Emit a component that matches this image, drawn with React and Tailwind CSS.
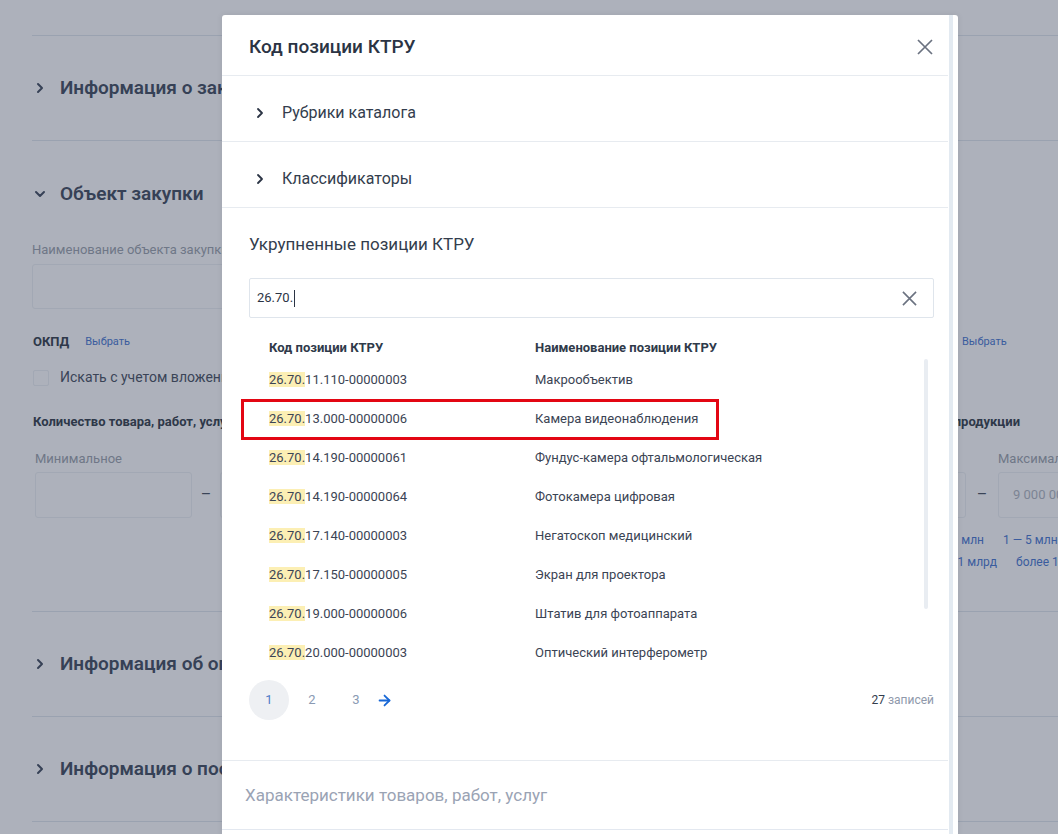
import { ChevronRight, ChevronDown, ArrowRight } from 'lucide-react';

const rows = [
  ['11.110-00000003', 'Макрообъектив'],
  ['13.000-00000006', 'Камера видеонаблюдения'],
  ['14.190-00000061', 'Фундус-камера офтальмологическая'],
  ['14.190-00000064', 'Фотокамера цифровая'],
  ['17.140-00000003', 'Негатоскоп медицинский'],
  ['17.150-00000005', 'Экран для проектора'],
  ['19.000-00000006', 'Штатив для фотоаппарата'],
  ['20.000-00000003', 'Оптический интерферометр'],
];

function Cross({ size = 16, className = '' }) {
  return (
    <svg width={size} height={size} viewBox="0 0 16 16" className={className} fill="none">
      <path d="M1 1L15 15M15 1L1 15" stroke="currentColor" strokeWidth="1.7" />
    </svg>
  );
}

function BgSection({ title }) {
  return (
    <div className="flex h-[105px] items-center gap-[12px] border-t border-[#9aa2b0]">
      <ChevronRight size={16} strokeWidth={3} className="text-[#364156]" />
      <span className="text-[19px] font-semibold text-[#364156] whitespace-nowrap">{title}</span>
    </div>
  );
}

function ObjectSection() {
  return (
    <div className="h-[471px] border-t border-[#9aa2b0]">
      <div className="flex h-[100px] items-center gap-[12px] pt-[6px]">
        <ChevronDown size={16} strokeWidth={3} className="text-[#364156]" />
        <span className="text-[19px] font-semibold text-[#364156]">Объект закупки</span>
      </div>
      <p className="text-[13px] leading-[18px] text-[#6f7787] whitespace-nowrap">Наименование объекта закупки</p>
      <div className="mt-[5px] h-[45px] w-[880px] rounded-[3px] border border-[#a2a8b4]" />

      <div className="mt-[25px] grid grid-cols-[500px_1fr] gap-x-[27px]">
        <div className="flex h-[16px] items-center gap-[16px] pl-[1px]">
          <span className="text-[13px] font-bold text-[#2e3849]">ОКПД</span>
          <span className="text-[11px] text-[#3a5c9e]">Выбрать</span>
        </div>
        <div className="flex h-[16px] items-center gap-[16px]">
          <span className="w-[387px] text-[13px] font-bold text-[#2e3849]">КТРУ</span>
          <span className="text-[11px] text-[#3a5c9e]">Выбрать</span>
        </div>
      </div>

      <div className="mt-[17px] flex items-center gap-[11px] pl-[1px]">
        <span className="h-[16px] w-[16px] rounded-[2px] border border-[#a2a8b4]" />
        <span className="text-[14px] text-[#3a4457] whitespace-nowrap">Искать с учетом вложенных позиций</span>
      </div>

      <div className="mt-[24px] grid grid-cols-[500px_1fr] gap-x-[27px] pl-[1px]">
        <span className="text-[13px] font-bold text-[#2e3849] whitespace-nowrap">Количество товара, работ, услуг</span>
        <span className="w-[460px] text-right text-[13px] font-bold text-[#2e3849] whitespace-nowrap">Цена за единицу продукции</span>
      </div>

      <div className="mt-[19px] grid grid-cols-[500px_1fr] gap-x-[27px]">
        <div className="pl-[3px]">
          <p className="text-[13px] leading-[16px] text-[#6f7787]">Минимальное</p>
          <div className="mt-[5px] flex items-center">
            <div className="h-[46px] w-[157px] rounded-[3px] border border-[#a2a8b4]" />
            <span className="w-[28px] text-center text-[#3a4457]">–</span>
            <div className="h-[46px] w-[157px] rounded-[3px] border border-[#a2a8b4]" />
          </div>
        </div>
        <div className="pl-[250px]">
          <div className="flex">
            <p className="w-[189px] text-[13px] leading-[16px] text-[#6f7787]">Минимальное</p>
            <p className="text-[13px] leading-[16px] text-[#6f7787]">Максимальное</p>
          </div>
          <div className="mt-[5px] flex items-center">
            <div className="h-[46px] w-[157px] rounded-[3px] border border-[#a2a8b4]" />
            <span className="w-[32px] text-center text-[#3a4457]">–</span>
            <div className="flex h-[46px] w-[157px] items-center rounded-[3px] border border-[#a2a8b4] pl-[14px] text-[13px] text-[#7c8494]">
              9 000 000
            </div>
          </div>
          <div className="mt-[13px] flex gap-[19px] text-[12px] text-[#3a5c9e]">
            <span className="w-[175px] text-right whitespace-nowrap">0,5 — 1 млн</span>
            <span className="whitespace-nowrap">1 — 5 млн</span>
          </div>
          <div className="mt-[4px] flex gap-[19px] text-[12px] text-[#3a5c9e]">
            <span className="w-[188px] text-right whitespace-nowrap">500 млн — 1 млрд</span>
            <span className="whitespace-nowrap">более 1 млрд</span>
          </div>
        </div>
      </div>
    </div>
  );
}

function Modal() {
  return (
    <div className="absolute left-[222px] top-[15px] flex h-[830px] w-[736px] rounded-t-[3px] bg-white shadow-[0_0_6px_rgba(0,0,0,0.08)]">
      <div className="flex-1">
        <div className="flex h-[61px] items-center justify-between border-b border-[#e7ebf0] pl-[27px] pr-[15px] pt-[4px]">
          <h2 className="text-[19px] font-medium text-[#2b3444]">Код позиции КТРУ</h2>
          <Cross size={16} className="text-[#6b7280]" />
        </div>

        {['Рубрики каталога', 'Классификаторы'].map((t) => (
          <div key={t} className="flex h-[66px] items-center gap-[14px] border-b border-[#e7ebf0] pl-[30px] pt-[8px]">
            <ChevronRight size={16} strokeWidth={2.75} className="text-[#2b3444]" />
            <span className="text-[16px] text-[#333d4d]">{t}</span>
          </div>
        ))}

        <div className="h-[553px] border-b border-[#e7ebf0] pl-[27px] pr-[14px]">
          <h3 className="pt-[24px] text-[17px] leading-[24px] text-[#333d4d]">Укрупненные позиции КТРУ</h3>
          <div className="mt-[22px] flex h-[40px] items-center justify-between rounded-[2px] border border-[#dfe5ec] pl-[7px] pr-[16px]">
            <span className="flex items-center text-[13px] text-[#2b3444]">
              26.70.
              <span className="ml-[1px] h-[17px] w-px bg-[#2b3444]" />
            </span>
            <Cross size={15} className="text-[#6b7280]" />
          </div>

          <div className="relative mt-[20px]">
            <div className="grid h-[19px] grid-cols-[266px_1fr] items-center pl-[20px] text-[13px] font-bold text-[#2f3a4a]">
              <span>Код позиции КТРУ</span>
              <span>Наименование позиции КТРУ</span>
            </div>
            <div className="mt-[3px]">
              {rows.map(([code, name], i) => (
                <div key={code} className="relative grid h-[39px] grid-cols-[266px_1fr] items-center pl-[20px] text-[13px] text-[#3b4454]">
                  <span>
                    <span className="bg-[#fcefb4]">26.70.</span>
                    {code}
                  </span>
                  <span>{name}</span>
                  {i === 1 && (
                    <div className="absolute -left-[8px] top-0 h-[41px] w-[478px] border-[3px] border-[#e30613]" />
                  )}
                </div>
              ))}
            </div>
            <div className="absolute right-[6px] top-[21px] h-[250px] w-[4px] rounded-full bg-[#e9edf2]" />
          </div>

          <div className="mt-[8px] flex items-center justify-between">
            <div className="flex items-center gap-[2px] text-[13px]">
              <span className="flex h-[40px] w-[40px] items-center justify-center rounded-full bg-[#eef0f3] text-[#4f7cc7]">1</span>
              <span className="flex h-[40px] w-[42px] items-center justify-center text-[#8a9ab3]">2</span>
              <span className="flex h-[40px] w-[42px] items-center justify-center text-[#8a9ab3]">3</span>
              <ArrowRight size={17} strokeWidth={2.5} className="-ml-[3px] text-[#1767d6]" />
            </div>
            <span className="text-[12px]">
              <span className="text-[#333d4d]">27</span> <span className="text-[#8f99ab]">записей</span>
            </span>
          </div>
        </div>

        <div className="flex h-[69px] items-center border-b border-[#e3e8f0] pl-[23px] pt-[1px]">
          <span className="text-[17px] text-[#9aa3b4]">Характеристики товаров, работ, услуг</span>
        </div>
      </div>
      <div className="ml-[1px] mr-[5px] w-[4px] bg-[#e3eaf1]" />
    </div>
  );
}

export default function App() {
  return (
    <div className="relative h-[834px] w-full overflow-hidden bg-[#adb1bb] font-['Roboto',sans-serif]">
      <div className="w-[1200px] pl-[32px] pt-[35px]">
        <BgSection title="Информация о закупке" />
        <ObjectSection />
        <BgSection title="Информация об ограничениях" />
        <BgSection title="Информация о поставке" />
        <div className="border-t border-[#9aa2b0]" />
      </div>
      <Modal />
    </div>
  );
}
